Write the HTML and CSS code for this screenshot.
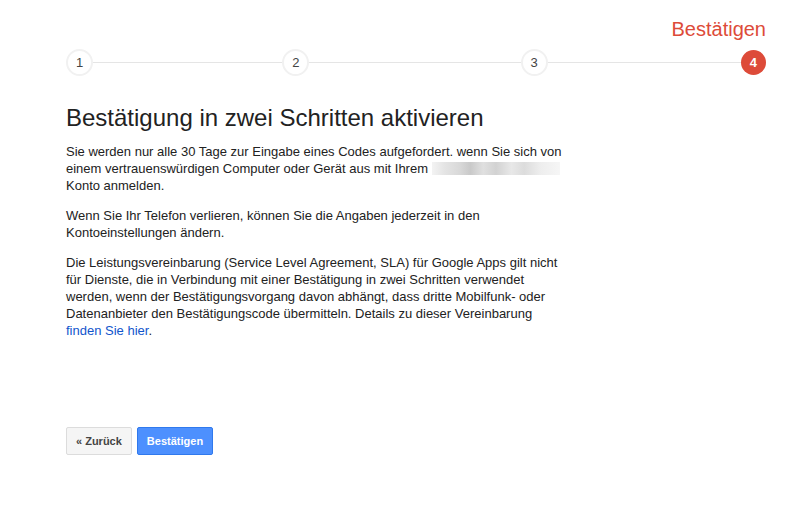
FILE: index.html
```html
<!DOCTYPE html>
<html lang="de">

<head>
    <meta charset="UTF-8">
    <title>Bestätigung in zwei Schritten</title>
    <link rel="stylesheet" href="styles.css">
</head>

<body>
    <div class="page">
        <div class="step_title">Bestätigen</div>
        <div class="steps">
            <span class="step">1</span>
            <span class="line line_a"></span>
            <span class="step">2</span>
            <span class="line line_b"></span>
            <span class="step">3</span>
            <span class="line line_c"></span>
            <span class="step active">4</span>
        </div>

        <h1>Bestätigung in zwei Schritten aktivieren</h1>

        <div class="content">
            <p>Sie werden nur alle 30 Tage zur Eingabe eines Codes aufgefordert. wenn Sie sich von
                einem vertrauenswürdigen Computer oder Gerät aus mit Ihrem <span class="blur"></span>
                Konto anmelden.</p>
            <p>Wenn Sie Ihr Telefon verlieren, können Sie die Angaben jederzeit in den
                Kontoeinstellungen ändern.</p>
            <p>Die Leistungsvereinbarung (Service Level Agreement, SLA) für Google Apps gilt nicht
                für Dienste, die in Verbindung mit einer Bestätigung in zwei Schritten verwendet
                werden, wenn der Bestätigungsvorgang davon abhängt, dass dritte Mobilfunk- oder
                Datenanbieter den Bestätigungscode übermitteln. Details zu dieser Vereinbarung
                <a href="#">finden Sie hier</a>.</p>
        </div>

        <div class="buttons">
            <button class="btn btn_back">« Zurück</button>
            <button class="btn btn_blue">Bestätigen</button>
        </div>
    </div>
</body>

</html>
```

FILE: styles.css
```css
body {
    margin: 0;
    padding: 0;
    background-color: #fff;
    font-family: "Liberation Sans", Arial, sans-serif;
    color: #222;
}

.page {
    padding: 16px 24px 0 66px;
}

.step_title {
    text-align: right;
    color: #dd4b39;
    font-size: 20px;
    line-height: 26px;
    margin-bottom: 7px;
}

.steps {
    display: flex;
    align-items: center;
}

.step {
    width: 23px;
    height: 23px;
    border: 2px solid #f1f1f1;
    border-radius: 50%;
    display: flex;
    justify-content: center;
    align-items: center;
    font-size: 13px;
    color: #444;
    flex-shrink: 0;
}

.step.active {
    width: 25px;
    height: 25px;
    border: none;
    background-color: #dd4b39;
    color: #fff;
    font-weight: bold;
}

.line {
    height: 1px;
    background-color: #e5e5e5;
}

.line_a {
    flex: 190;
}

.line_b {
    flex: 212;
}

.line_c {
    flex: 194;
}

h1 {
    font-weight: normal;
    font-size: 24px;
    line-height: 30px;
    color: #222;
    margin: 27px 0 10px 0;
}

.content {
    width: 500px;
    font-size: 13px;
    line-height: 17px;
}

.content p {
    margin: 0 0 13px 0;
}

.content a {
    color: #1155cc;
    text-decoration: none;
}

.blur {
    display: inline-block;
    width: 128px;
    height: 13px;
    vertical-align: -2px;
    background: linear-gradient(90deg, #f3f3f3 0, #e4e4e4 10%, #d8d8d8 22%, #c9c9c9 30%, #e0e0e0 40%, #d2d2d2 50%, #e8e8e8 62%, #dcdcdc 72%, #eeeeee 85%, #f6f6f6 100%);
}

.buttons {
    display: flex;
    gap: 5px;
    margin-top: 88px;
}

.btn {
    height: 28px;
    padding: 0 9px;
    border-radius: 2px;
    font-family: "Liberation Sans", Arial, sans-serif;
    font-size: 11px;
    font-weight: bold;
    cursor: pointer;
}

.btn_back {
    background-color: #f5f5f5;
    border: 1px solid #dcdcdc;
    color: #444;
}

.btn_blue {
    background-color: #4d90fe;
    border: 1px solid #3079ed;
    color: #fff;
}
```
